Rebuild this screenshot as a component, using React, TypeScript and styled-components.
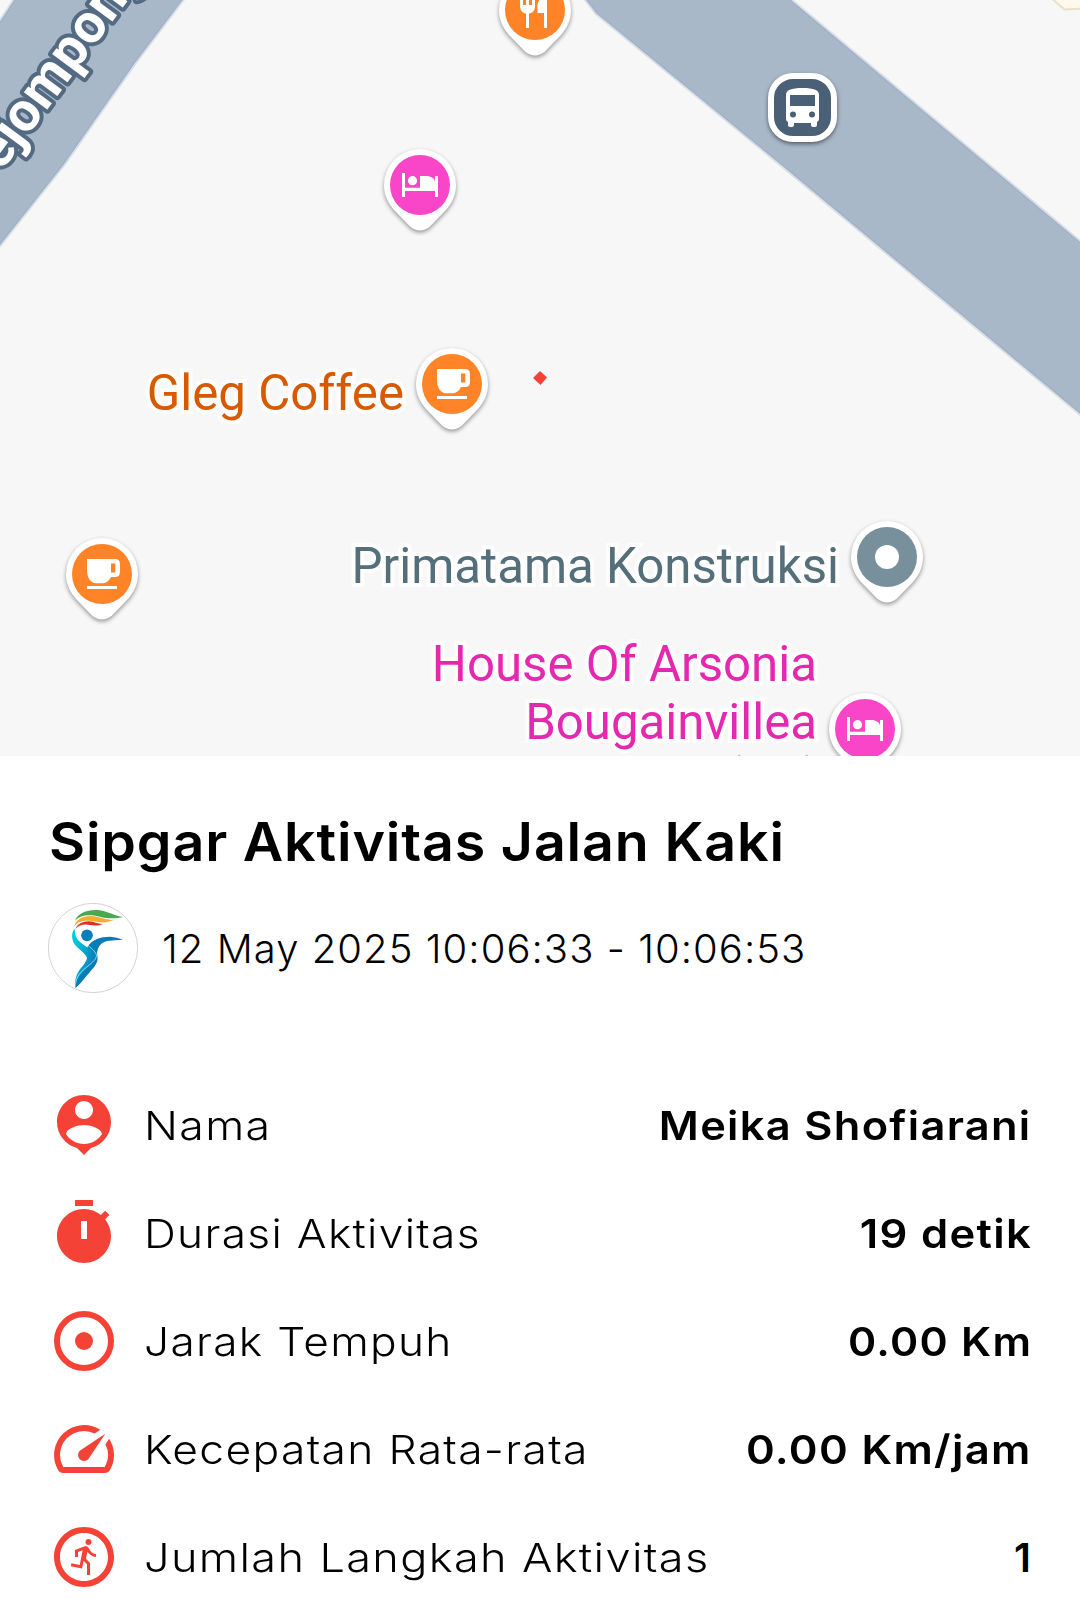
import type { ReactNode } from "react";
import { MdOutlineRunCircle, MdSpeed } from "react-icons/md";
import styled, { createGlobalStyle } from "styled-components";

interface Poi {
  id: string;
  x: number;
  y: number;
  color: string;
  icon: ReactNode;
}

interface Stat {
  label: string;
  value: string;
  icon: ReactNode;
  labelStretch: number;
  valueStretch: number;
}

const BedIcon = () => (
  <g fill="#fff">
    <path d="M-18-12h3V2.8H0V-9h6C11-9 15-6.500 15-3V-9h3V12h-3V6h-30v6h-3z" />
    <circle cx="-7.500" cy="-4.300" r="4.600" />
  </g>
);

const CoffeeIcon = () => (
  <g fill="#fff">
    <path
      fillRule="evenodd"
      d="M-15-15H13Q18-15 18-10V-2Q18 3 13 3H9C7 7 4 9.200 1 9.200H-6C-12 9.200-15 3-15-4zM9-10.500V-1.500H13.300V-10.500z"
    />
    <path d="M-15 12h30v3h-30z" />
  </g>
);

const FoodIcon = () => (
  <g fill="#fff">
    <path d="M-15-14h3v9h3v-9h3v9h3v-9h3v10C0 0-2 3-6 3.600V18h-3V3.600C-13 3-15 0-15-4z" />
    <path d="M12-14V18H9V3H2.500V-4C2.500-9 6-14 12-14z" />
  </g>
);

const DotIcon = () => <circle r="12" fill="#fff" />;

const pois: Poi[] = [
  { id: "food", x: 535, y: 10, color: "#ff8327", icon: <FoodIcon /> },
  { id: "hotel", x: 420, y: 184.5, color: "#f946c8", icon: <BedIcon /> },
  { id: "gleg", x: 451.5, y: 384, color: "#ff8327", icon: <CoffeeIcon /> },
  { id: "coffee", x: 102, y: 573.5, color: "#ff8327", icon: <CoffeeIcon /> },
  { id: "primatama", x: 887, y: 557, color: "#78909c", icon: <DotIcon /> },
  { id: "arsonia", x: 865, y: 729, color: "#f946c8", icon: <BedIcon /> },
];

const PersonIcon = () => (
  <svg viewBox="0 0 24 24">
    <path d="M12 2c-4.970 0-9 4.030-9 9 0 4.170 2.840 7.670 6.690 8.690L12 22l2.310-2.310C18.160 18.670 21 15.170 21 11c0-4.970-4.030-9-9-9zm0 2c1.660 0 3 1.340 3 3s-1.340 3-3 3-3-1.340-3-3 1.340-3 3-3zm0 14.300c-2.500 0-4.710-1.280-6-3.220.030-1.990 4-3.080 6-3.080 1.990 0 5.970 1.090 6 3.080-1.290 1.940-3.500 3.220-6 3.220z" />
  </svg>
);

const TimerIcon = () => (
  <svg viewBox="0 0 24 24">
    <path
      fillRule="evenodd"
      d="M15 1H9v2h6V1zm-4 13h2V8h-2v6zm8.030-6.610l1.420-1.420c-.430-.510-.900-.990-1.410-1.410l-1.420 1.420C16.070 4.740 14.120 4 12 4c-4.970 0-9 4.030-9 9s4.020 9 9 9 9-4.030 9-9c0-2.120-.740-4.070-1.970-5.610z"
    />
  </svg>
);

const TargetIcon = () => (
  <svg viewBox="0 0 24 24">
    <circle cx="12" cy="12" r="9" fill="none" stroke="currentColor" strokeWidth="2" />
    <circle cx="12" cy="12" r="3" />
  </svg>
);

const stats: Stat[] = [
  { label: "Nama", value: "Meika Shofiarani", icon: <PersonIcon />, labelStretch: 1.117, valueStretch: 1.085 },
  { label: "Durasi Aktivitas", value: "19 detik", icon: <TimerIcon />, labelStretch: 1.105, valueStretch: 1.09 },
  { label: "Jarak Tempuh", value: "0.00 Km", icon: <TargetIcon />, labelStretch: 1.105, valueStretch: 1.07 },
  { label: "Kecepatan Rata-rata", value: "0.00 Km/jam", icon: <MdSpeed />, labelStretch: 1.109, valueStretch: 1.092 },
  { label: "Jumlah Langkah Aktivitas", value: "1", icon: <MdOutlineRunCircle />, labelStretch: 1.127, valueStretch: 1 },
];

const Logo = () => (
  <svg viewBox="24 23 270 270" width="90" height="90">
    <defs>
      <linearGradient id="body" x1="0" y1="0" x2="1" y2="0.600">
        <stop offset="0.200" stopColor="#00c8dc" />
        <stop offset="1" stopColor="#0878bb" />
      </linearGradient>
    </defs>
    <circle cx="159" cy="158" r="134" fill="#fff" stroke="#bdbdbd" strokeWidth="2" />
    <path fill="#4aa84e" d="M105 76C113 53 143 42 174 44C200 46 222 62 250 65C220 73 194 68 166 61C139 57 119 61 105 76z" />
    <path fill="#f3ad31" d="M103 93C107 73 125 62 153 62C180 64 192 73 221 74C198 84 181 82 157 77C133 74 113 78 103 93z" />
    <path fill="#dc3030" d="M106 102C111 86 128 78 147 78C163 79 173 86 188 86C172 93 160 90 143 88C125 87 113 92 106 102z" />
    <circle cx="141" cy="120" r="17.500" fill="#087fbd" />
    <path fill="#087bb9" d="M142 155C156 132 181 124 211 124Q232 125 249 133Q225 134 201 137C182 142 174 153 171 174C174 191 174 199 164 213L120 265L106 279L107 258C121 228 153 205 153 184z" />
    <path fill="url(#body)" d="M105 101C95 107 94 127 101 142C109 157 140 175 141 189C136 213 105 223 105 270C113 240 139 219 160 203C175 189 169 172 153 163C126 145 101 133 106 101z" />
    <path fill="none" stroke="#fff" strokeWidth="1.800" d="M106 100C102 139 158 148 169 178C174 204 110 220 107 265" />
  </svg>
);

const App = () => {
  return (
    <>
      <GlobalStyle />
      <StScreen>
        <StMap>
          <StMapCanvas viewBox="0 0 1080 756">
            <defs>
              <path id="road-west" d="M-10 38L17-3H184L134 63L64 163L0 244L-10 257z" />
              <path id="road-east" d="M583-5L597 13L780 163L960 313L1090 421V251L785-4z" />
            </defs>
            <g fill="none" stroke="#a0b2c7" strokeWidth="5" opacity="0.350">
              <use href="#road-west" />
              <use href="#road-east" />
            </g>
            <g fill="#a9b8c9" stroke="#a0b2c7" strokeWidth="1.500">
              <use href="#road-west" />
              <use href="#road-east" />
            </g>
            <path d="M1050-3L1064.500 9.500L1083 8.500V-3z" fill="#fff9ed" stroke="#eadfc8" strokeWidth="2" />
            <StRoadName transform="translate(-20 200.500) rotate(-53.500)">Pejompongan</StRoadName>
            <path d="M540 371L547 377.500L540.500 385L533 378z" fill="#f44336" />
            <path d="M738 757l2-2M806 755l2 2" stroke="#f5a3dd" strokeWidth="2" />
          </StMapCanvas>

          <StPlaceName $right={676} $top={364} $color="#d85a00">
            Gleg Coffee
          </StPlaceName>
          <StPlaceName $right={241} $top={537} $color="#546e7a">
            Primatama Konstruksi
          </StPlaceName>
          <StPlaceName $right={263} $top={635} $color="#e528b0">
            House Of Arsonia
            <br />
            Bougainvillea
          </StPlaceName>

          <StBusStop>
            <svg viewBox="0 0 33 39" width="33" height="39">
              <path
                fill="#fff"
                fillRule="evenodd"
                d="M0 7C0 2 5 0 16.500 0S33 2 33 7V31Q33 33 31 34V37Q31 39 29 39H27Q25 39 25 37V35H8V37Q8 39 6 39H4Q2 39 2 37V34Q0 33 0 31zM4 7V18H29V7zM4 26.500a3 3 0 1 0 6 0a3 3 0 1 0-6 0M23 26.500a3 3 0 1 0 6 0a3 3 0 1 0-6 0"
              />
            </svg>
          </StBusStop>

          {pois.map(({ id, x, y, color, icon }) => (
            <StPin key={id} $x={x} $y={y} viewBox="-36 -36 72 84">
              <path
                fill="#fff"
                d="M-36 0A36 36 0 1 1 36 0C36 10 32 18 26 25L10 41.500Q0 49.500-10 41.500L-26 25C-32 18-36 10-36 0z"
              />
              <circle r="30" fill={color} />
              {icon}
            </StPin>
          ))}
        </StMap>

        <StDetail>
          <StTitle>Sipgar Aktivitas Jalan Kaki</StTitle>
          <StDateRow>
            <Logo />
            <StDate>12 May 2025 10:06:33 - 10:06:53</StDate>
          </StDateRow>
          <StStatList>
            {stats.map(({ label, value, icon, labelStretch, valueStretch }) => (
              <StStat key={label}>
                <StStatIcon>{icon}</StStatIcon>
                <StLabel $stretch={labelStretch}>{label}</StLabel>
                <StValue $stretch={valueStretch}>{value}</StValue>
              </StStat>
            ))}
          </StStatList>
        </StDetail>
      </StScreen>
    </>
  );
};

export default App;

const GlobalStyle = createGlobalStyle`
  * {
    box-sizing: border-box;
  }
  body {
    margin: 0;
    background: #fff;
  }
`;

const StScreen = styled.main`
  width: 1080px;
  height: 1609px;
  overflow: hidden;
  background: #fff;
  color: #000;
  font-family: Inter, "Liberation Sans", sans-serif;
`;

const StMap = styled.section`
  position: relative;
  height: 756px;
  overflow: hidden;
  background: #f7f7f7;
`;

const StMapCanvas = styled.svg`
  display: block;
  width: 100%;
  height: 100%;
`;

const StRoadName = styled.text`
  font: 700 55px Roboto, sans-serif;
  fill: #fff;
  stroke: #546a83;
  stroke-width: 8px;
  stroke-linejoin: round;
  paint-order: stroke;
`;

const StPlaceName = styled.div<{ $right: number; $top: number; $color: string }>`
  position: absolute;
  right: ${({ $right }) => $right}px;
  top: ${({ $top }) => $top}px;
  color: ${({ $color }) => $color};
  font: 400 49.2px/58px Roboto, sans-serif;
  text-align: right;
  white-space: nowrap;
  -webkit-text-stroke: 8px #fdfdfd;
  paint-order: stroke fill;
`;

const StPin = styled.svg<{ $x: number; $y: number }>`
  position: absolute;
  left: ${({ $x }) => $x - 36}px;
  top: ${({ $y }) => $y - 36}px;
  width: 72px;
  height: 84px;
  overflow: visible;
  filter: drop-shadow(0 2px 2px rgba(0, 0, 0, 0.4));
`;

const StBusStop = styled.div`
  position: absolute;
  left: 768px;
  top: 73px;
  display: flex;
  align-items: center;
  justify-content: center;
  width: 69px;
  height: 69px;
  border: 6px solid #fff;
  border-radius: 25px;
  background: #4a6076;
  box-shadow: 0 2px 4px rgba(0, 0, 0, 0.5);
`;

const StDetail = styled.section`
  padding: 56px 48px 0;
`;

const StTitle = styled.h1`
  margin: 0 0 0 1px;
  font-size: 53px;
  font-weight: 600;
  line-height: 60px;
  letter-spacing: 0.8px;
  white-space: nowrap;
  transform: scaleX(1.048);
  transform-origin: left;
`;

const StDateRow = styled.div`
  display: flex;
  align-items: center;
  gap: 24px;
  height: 90px;
  margin-top: 31px;
`;

const StDate = styled.p`
  margin: 0;
  font-size: 40px;
  font-weight: 300;
  letter-spacing: 1.05px;
  white-space: nowrap;
`;

const StStatList = styled.ul`
  margin: 78px 0 0;
  padding: 0;
  list-style: none;
`;

const StStat = styled.li`
  display: flex;
  align-items: center;
  justify-content: space-between;
  height: 108px;
`;

const StStatIcon = styled.span`
  flex: none;
  width: 72px;
  height: 72px;
  margin-right: 24px;
  color: #f44336;

  svg {
    display: block;
    width: 72px;
    height: 72px;
    fill: currentColor;
  }
`;

const StLabel = styled.span<{ $stretch: number }>`
  margin-right: auto;
  font-size: 40px;
  font-weight: 300;
  letter-spacing: 1.2px;
  white-space: nowrap;
  transform: scaleX(${({ $stretch }) => $stretch});
  transform-origin: left;
`;

const StValue = styled.span<{ $stretch: number }>`
  font-size: 40px;
  font-weight: 600;
  letter-spacing: 1.2px;
  white-space: nowrap;
  transform: scaleX(${({ $stretch }) => $stretch});
  transform-origin: right;
`;
